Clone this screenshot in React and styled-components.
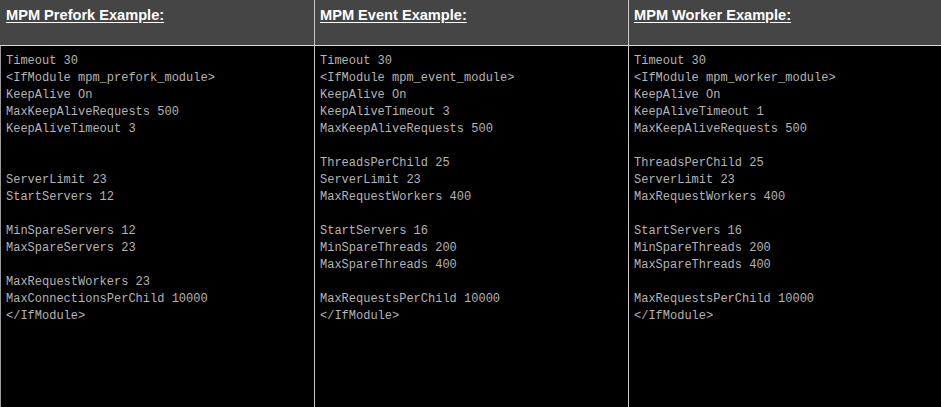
import React from "react";
import styled, { createGlobalStyle } from "styled-components";

const GlobalStyle = createGlobalStyle`
  html, body {
    margin: 0;
    padding: 0;
    background: #000;
  }
`;

const Table = styled.div`
  display: grid;
  grid-template-columns: 314px 314px 313px;
  grid-template-rows: 46px 361px;
  width: 941px;
  height: 407px;
  background: #000;
  box-sizing: border-box;
`;

const HeadCell = styled.div`
  background: #454545;
  border-bottom: 1px solid #d8d8d8;
  border-left: ${(p) => (p.$first ? "none" : "1px solid #c8c8c8")};
  padding: 6px 6px 0 ${(p) => (p.$first ? "6px" : "5px")};
  box-sizing: border-box;
`;

const Title = styled.span`
  font-family: "Liberation Sans", Arial, sans-serif;
  font-weight: bold;
  font-size: 14.6px;
  color: #fff;
  text-decoration: underline;
  text-underline-offset: 2px;
`;

const BodyCell = styled.div`
  border-left: 1px solid ${(p) => (p.$first ? "#9a9a9a" : "#c8c8c8")};
  padding: 7px 6px 0 5px;
  box-sizing: border-box;
`;

const Code = styled.pre`
  margin: 0;
  font-family: "Liberation Mono", "Courier New", monospace;
  font-size: 12px;
  line-height: 17px;
  color: #b4b4b4;
`;

const columns = [
  {
    title: "MPM Prefork Example:",
    lines: [
      "Timeout 30",
      "<IfModule mpm_prefork_module>",
      "KeepAlive On",
      "MaxKeepAliveRequests 500",
      "KeepAliveTimeout 3",
      "",
      "",
      "ServerLimit 23",
      "StartServers 12",
      "",
      "MinSpareServers 12",
      "MaxSpareServers 23",
      "",
      "MaxRequestWorkers 23",
      "MaxConnectionsPerChild 10000",
      "</IfModule>",
    ],
  },
  {
    title: "MPM Event Example:",
    lines: [
      "Timeout 30",
      "<IfModule mpm_event_module>",
      "KeepAlive On",
      "KeepAliveTimeout 3",
      "MaxKeepAliveRequests 500",
      "",
      "ThreadsPerChild 25",
      "ServerLimit 23",
      "MaxRequestWorkers 400",
      "",
      "StartServers 16",
      "MinSpareThreads 200",
      "MaxSpareThreads 400",
      "",
      "MaxRequestsPerChild 10000",
      "</IfModule>",
    ],
  },
  {
    title: "MPM Worker Example:",
    lines: [
      "Timeout 30",
      "<IfModule mpm_worker_module>",
      "KeepAlive On",
      "KeepAliveTimeout 1",
      "MaxKeepAliveRequests 500",
      "",
      "ThreadsPerChild 25",
      "ServerLimit 23",
      "MaxRequestWorkers 400",
      "",
      "StartServers 16",
      "MinSpareThreads 200",
      "MaxSpareThreads 400",
      "",
      "MaxRequestsPerChild 10000",
      "</IfModule>",
    ],
  },
];

const App = () => {
  return (
    <>
      <GlobalStyle />
      <Table>
        {columns.map((col, i) => (
          <HeadCell key={col.title} $first={i === 0}>
            <Title>{col.title}</Title>
          </HeadCell>
        ))}
        {columns.map((col, i) => (
          <BodyCell key={col.title + "-body"} $first={i === 0}>
            <Code>{col.lines.join("\n")}</Code>
          </BodyCell>
        ))}
      </Table>
    </>
  );
};

export default App;
